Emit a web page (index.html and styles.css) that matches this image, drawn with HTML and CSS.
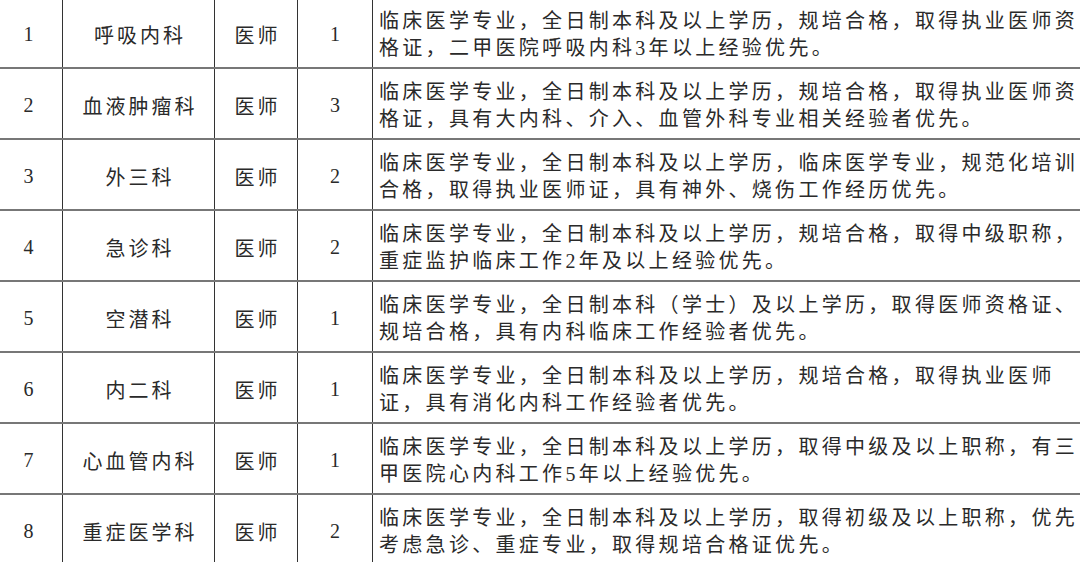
FILE: index.html
```html
<!DOCTYPE html>
<html lang="zh-CN">
<head>
<meta charset="utf-8">
<link rel="stylesheet" href="styles.css">
</head>
<body>
<table class="jobs">
  <colgroup>
    <col class="c-no"><col class="c-dept"><col class="c-pos"><col class="c-num"><col class="c-desc">
  </colgroup>
  <tbody>
    <tr><td class="ctr">1</td><td class="ctr">呼吸内科</td><td class="ctr">医师</td><td class="ctr">1</td><td class="desc">临床医学专业，全日制本科及以上学历，规培合格，取得执业医师资格证，二甲医院呼吸内科3年以上经验优先。</td></tr>
    <tr><td class="ctr">2</td><td class="ctr">血液肿瘤科</td><td class="ctr">医师</td><td class="ctr">3</td><td class="desc">临床医学专业，全日制本科及以上学历，规培合格，取得执业医师资格证，具有大内科、介入、血管外科专业相关经验者优先。</td></tr>
    <tr><td class="ctr">3</td><td class="ctr">外三科</td><td class="ctr">医师</td><td class="ctr">2</td><td class="desc">临床医学专业，全日制本科及以上学历，临床医学专业，规范化培训合格，取得执业医师证，具有神外、烧伤工作经历优先。</td></tr>
    <tr><td class="ctr">4</td><td class="ctr">急诊科</td><td class="ctr">医师</td><td class="ctr">2</td><td class="desc">临床医学专业，全日制本科及以上学历，规培合格，取得中级职称，重症监护临床工作2年及以上经验优先。</td></tr>
    <tr><td class="ctr">5</td><td class="ctr">空潜科</td><td class="ctr">医师</td><td class="ctr">1</td><td class="desc">临床医学专业，全日制本科（学士）及以上学历，取得医师资格证、规培合格，具有内科临床工作经验者优先。</td></tr>
    <tr><td class="ctr">6</td><td class="ctr">内二科</td><td class="ctr">医师</td><td class="ctr">1</td><td class="desc">临床医学专业，全日制本科及以上学历，规培合格，取得执业医师证，具有消化内科工作经验者优先。</td></tr>
    <tr><td class="ctr">7</td><td class="ctr">心血管内科</td><td class="ctr">医师</td><td class="ctr">1</td><td class="desc">临床医学专业，全日制本科及以上学历，取得中级及以上职称，有三甲医院心内科工作5年以上经验优先。</td></tr>
    <tr><td class="ctr">8</td><td class="ctr">重症医学科</td><td class="ctr">医师</td><td class="ctr">2</td><td class="desc">临床医学专业，全日制本科及以上学历，取得初级及以上职称，优先考虑急诊、重症专业，取得规培合格证优先。</td></tr>
  </tbody>
</table>
</body>
</html>
```

FILE: styles.css
```css
html, body {
  margin: 0;
  padding: 0;
  background: #ffffff;
  overflow: hidden;
}

.jobs {
  border-collapse: collapse;
  table-layout: fixed;
  width: 1100px;
  margin-top: -4px;
  margin-left: -6px;
  font-family: "Liberation Serif", "Noto Sans CJK SC", serif;
  font-size: 20px;
  color: #2a2a2a;
}

.c-no { width: 68px; }
.c-dept { width: 152px; }
.c-pos { width: 83px; }
.c-num { width: 75px; }
.c-desc { width: 722px; }

.jobs tr {
  height: 71px;
}

.jobs td {
  border-left: 1.5px solid #333333;
  border-right: 1.5px solid #333333;
  border-top: 2px solid #777777;
  border-bottom: 2px solid #777777;
  padding: 0;
  vertical-align: middle;
}

.ctr {
  text-align: center;
  letter-spacing: 3px;
  padding-left: 3px !important;
  padding-top: 4px !important;
}

.desc {
  text-align: left;
  letter-spacing: 3.3px;
  line-height: 27px;
  padding: 5px 0 0 6px !important;
}
```
